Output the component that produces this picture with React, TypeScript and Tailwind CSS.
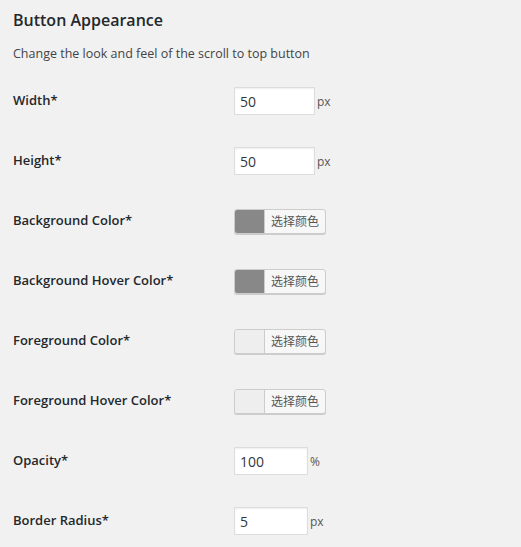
import React from "react";

type Row =
  | { label: string; kind: "number"; value: string; unit: string; w: string }
  | { label: string; kind: "color"; swatch: string };

const ROWS: Row[] = [
  { label: "Width*", kind: "number", value: "50", unit: "px", w: "w-[81px]" },
  { label: "Height*", kind: "number", value: "50", unit: "px", w: "w-[81px]" },
  { label: "Background Color*", kind: "color", swatch: "bg-[#888888]" },
  { label: "Background Hover Color*", kind: "color", swatch: "bg-[#888888]" },
  { label: "Foreground Color*", kind: "color", swatch: "bg-[#eeeeee]" },
  { label: "Foreground Hover Color*", kind: "color", swatch: "bg-[#eeeeee]" },
  { label: "Opacity*", kind: "number", value: "100", unit: "%", w: "w-[74px]" },
  { label: "Border Radius*", kind: "number", value: "5", unit: "px", w: "w-[74px]" },
];

const App = () => {
  return (
    <div className="min-h-[547px] bg-[#f1f1f1] px-[13px] font-['Open_Sans',sans-serif] text-[#23282d]">
      <h2 className="pt-[8px] text-[16px] font-semibold leading-[24px]">Button Appearance</h2>
      <p className="mt-[13px] text-[12.5px] leading-[18px] text-[#444]">
        Change the look and feel of the scroll to top button
      </p>
      <div className="mt-[8px] flex flex-col">
        {ROWS.map((row) => (
          <div key={row.label} className="flex h-[60px] items-center">
            <div className="w-[221px] text-[13px] font-semibold">{row.label}</div>
            {row.kind === "number" ? (
              <div className="flex items-center">
                <input
                  readOnly
                  value={row.value}
                  className={`${row.w} h-[28px] border border-[#dddddd] bg-white px-[5px] text-[14px] text-[#32373c] shadow-[inset_0_1px_2px_rgba(0,0,0,0.07)] outline-none`}
                />
                <span className="ml-[2px] mt-[2px] text-[12px] text-[#555]">{row.unit}</span>
              </div>
            ) : (
              <div className="flex h-[25px] w-[92px] overflow-hidden rounded-[3px] border border-[#cccccc] bg-[#f7f7f7] shadow-[0_1px_0_#cccccc]">
                <div className={`${row.swatch} w-[30px] border-r border-[#cccccc]`} />
                <div className="flex flex-1 items-center justify-center text-[12px] text-[#555] font-['Noto_Sans_CJK_SC',sans-serif]">
                  选择颜色
                </div>
              </div>
            )}
          </div>
        ))}
      </div>
    </div>
  );
};

export default App;
